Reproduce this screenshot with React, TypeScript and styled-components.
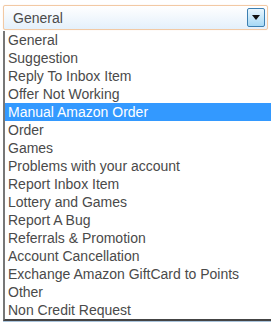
import React from "react";
import { styled, createGlobalStyle } from "styled-components";

const options = [
  "General",
  "Suggestion",
  "Reply To Inbox Item",
  "Offer Not Working",
  "Manual Amazon Order",
  "Order",
  "Games",
  "Problems with your account",
  "Report Inbox Item",
  "Lottery and Games",
  "Report A Bug",
  "Referrals & Promotion",
  "Account Cancellation",
  "Exchange Amazon GiftCard to Points",
  "Other",
  "Non Credit Request",
];

const App = () => {
  return (
    <Wrapper>
      <GlobalStyle />
      <SelectBox>
        <SelectedText>General</SelectedText>
        <ArrowButton>
          <svg width="8" height="5" viewBox="0 0 8 5">
            <path d="M0 0 L8 0 L4 5 Z" fill="#111" />
          </svg>
        </ArrowButton>
      </SelectBox>
      <List>
        {options.map((label) => (
          <Item key={label} $active={label === "Manual Amazon Order"}>
            {label}
          </Item>
        ))}
      </List>
    </Wrapper>
  );
};

export default App;

const GlobalStyle = createGlobalStyle`
  body {
    margin: 0;
    background: #fff;
    font-family: "Liberation Sans", Arial, sans-serif;
  }
`;

const Wrapper = styled.div`
  width: 271px;
  height: 324px;
  padding: 5px 0 0 3px;
  box-sizing: border-box;
  overflow: hidden;
`;

const SelectBox = styled.div`
  display: flex;
  align-items: center;
  justify-content: space-between;
  width: 265px;
  height: 25px;
  box-sizing: border-box;
  border: 1px solid #f2c9a4;
  border-radius: 2px;
  background: linear-gradient(#ffffff, #e4f0fb);
  padding: 0 2px 0 9px;
  box-shadow: 0 0 1px #f6d8bc;
`;

const SelectedText = styled.span`
  font-size: 14px;
  color: #4a4a4a;
`;

const ArrowButton = styled.div`
  display: flex;
  align-items: center;
  justify-content: center;
  width: 18px;
  height: 19px;
  box-sizing: border-box;
  border: 1px solid #3c7fb1;
  border-radius: 2px;
  background: linear-gradient(#eaf6fd, #a7d9f5);
`;

const List = styled.div`
  margin-top: 1px;
  width: 272px;
  border-left: 2px solid #777;
  border-bottom: 2px solid #444;
  box-shadow: 0 1px 0 #aac4dc;
`;

const Item = styled.div<{ $active?: boolean }>`
  height: 18px;
  line-height: 18px;
  padding-left: 3px;
  font-size: 14px;
  white-space: nowrap;
  color: ${(p) => (p.$active ? "#fff" : "#4a4a4a")};
  background: ${(p) => (p.$active ? "#3399ff" : "transparent")};
`;
